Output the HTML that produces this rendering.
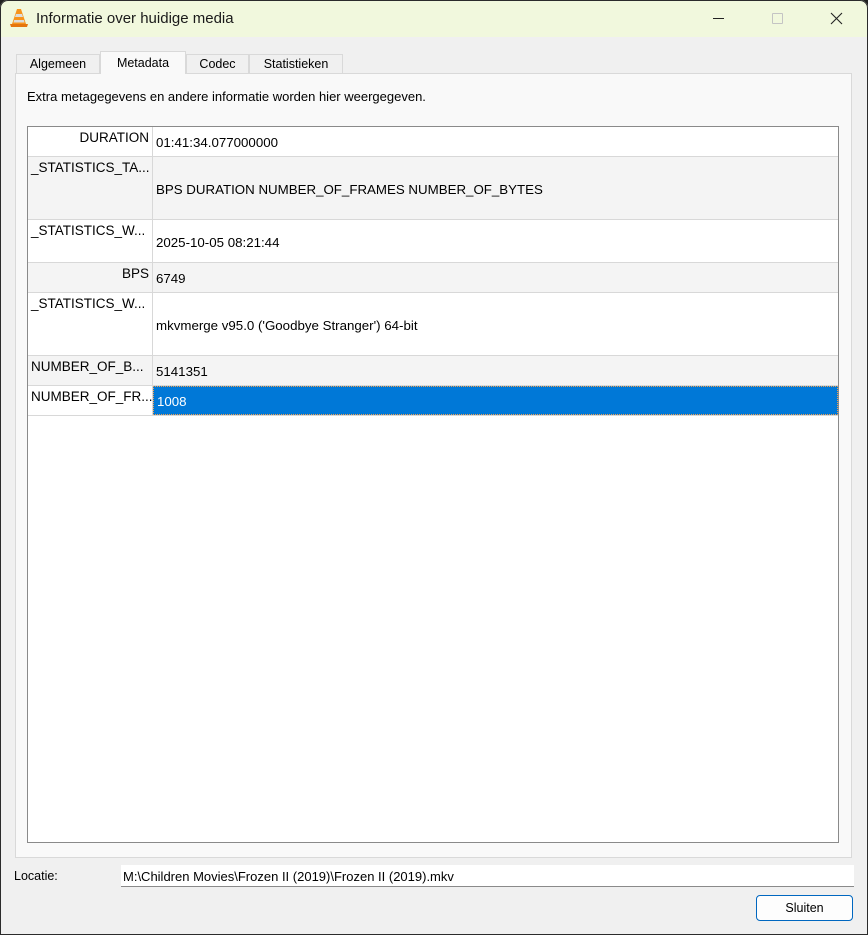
<!DOCTYPE html>
<html><head><meta charset="utf-8"><style>
*{box-sizing:border-box;margin:0;padding:0}
body{width:868px;height:935px;overflow:hidden;background:#202020;font-family:"Liberation Sans",sans-serif;color:#000}
.win{position:absolute;left:0;top:0;width:868px;height:935px;background:#f0f0f0;border-radius:8px 8px 0 0;overflow:hidden}
.bord{position:absolute;left:0;top:0;width:868px;height:935px;border:1px solid #2b2b2b;border-radius:8px 8px 0 0;z-index:10;pointer-events:none}
.title{position:absolute;left:0;top:0;width:868px;height:37px;background:#f1f8dd}
.title .t{position:absolute;left:36px;top:10px;font-size:15px;color:#1a1a1a}
.tab{position:absolute;top:54px;height:20px;border:1px solid #d9d9d9;border-bottom:none;background:#f0f0f0;font-size:12.5px;text-align:center;line-height:19px}
.tab.sel{top:51px;height:23px;background:#f9f9f9;z-index:2;line-height:22px}
.pane{position:absolute;left:15px;top:73px;width:837px;height:785px;background:#f9f9f9;border:1px solid #d9d9d9}
.desc{position:absolute;left:27px;top:89px;font-size:13px}
.tbl{position:absolute;left:27px;top:126px;width:812px;height:717px;background:#fff;border:1px solid #8a8a8a}
.row{position:absolute;left:0;width:810px;border-bottom:1px solid #d8d8d8}
.k{position:absolute;left:0;top:0;width:125px;height:100%;border-right:1px solid #d8d8d8;font-size:13.5px;padding:3px 3px 0 3px;white-space:nowrap;overflow:hidden}
.v{position:absolute;left:125px;top:0;right:0;height:100%;font-size:13.3px;padding-left:3px;padding-top:2px;display:flex;align-items:center}
.g{background:#f4f4f4}
</style></head><body>
<div class="win">
<div class="title">
<svg style="position:absolute;left:10px;top:8px" width="18" height="20" viewBox="0 0 18 20"><path d="M7 1h4l5 15H2z" fill="#f7941d"/><path d="M6 6h6l1 3H5z" fill="#dcdcdc"/><path d="M4.2 12h9.6l.8 2.5H3.4z" fill="#dcdcdc"/><path d="M0 16h18l-1 3H1z" fill="#e5750e"/></svg>
<div class="t">Informatie over huidige media</div>
<div style="position:absolute;left:713px;top:18px;width:11px;height:1px;background:#222"></div>
<div style="position:absolute;left:772px;top:13px;width:11px;height:11px;border:1px solid #c4c4c4;border-radius:1px"></div>
<svg style="position:absolute;left:830px;top:12px" width="13" height="13" viewBox="0 0 13 13"><path d="M1 1L12 12M12 1L1 12" stroke="#222" stroke-width="1.1"/></svg>
</div>
<div class="tab" style="left:16px;width:84px">Algemeen</div>
<div class="tab sel" style="left:100px;width:86px">Metadata</div>
<div class="tab" style="left:186px;width:63px">Codec</div>
<div class="tab" style="left:249px;width:94px">Statistieken</div>
<div class="pane"></div>
<div class="desc">Extra metagegevens en andere informatie worden hier weergegeven.</div>
<div class="tbl">
<div class="row" style="top:0;height:30px"><div class="k" style="text-align:right">DURATION</div><div class="v">01:41:34.077000000</div></div>
<div class="row g" style="top:30px;height:63px"><div class="k">_STATISTICS_TA...</div><div class="v">BPS DURATION NUMBER_OF_FRAMES NUMBER_OF_BYTES</div></div>
<div class="row" style="top:93px;height:43px"><div class="k">_STATISTICS_W...</div><div class="v">2025-10-05 08:21:44</div></div>
<div class="row g" style="top:136px;height:30px"><div class="k" style="text-align:right">BPS</div><div class="v">6749</div></div>
<div class="row" style="top:166px;height:63px"><div class="k">_STATISTICS_W...</div><div class="v">mkvmerge v95.0 ('Goodbye Stranger') 64-bit</div></div>
<div class="row g" style="top:229px;height:30px"><div class="k">NUMBER_OF_B...</div><div class="v">5141351</div></div>
<div class="row" style="top:259px;height:30px"><div class="k">NUMBER_OF_FR...</div><div class="v" style="background:#0078d7;color:#fff;border:1px dotted #f0a050">1008</div></div>
</div>
<div style="position:absolute;left:14px;top:869px;font-size:12.5px">Locatie:</div>
<div style="position:absolute;left:121px;top:865px;width:733px;height:22px;background:#fff;border-bottom:1px solid #8a8a8a;font-size:13px;padding:4px 0 0 2px">M:\Children Movies\Frozen II (2019)\Frozen II (2019).mkv</div>
<div style="position:absolute;left:756px;top:895px;width:97px;height:26px;background:#fdfdfd;border:1px solid #0067c0;border-radius:4px;font-size:12.5px;text-align:center;line-height:24px">Sluiten</div>
</div>
<div class="bord"></div>
</body></html>
